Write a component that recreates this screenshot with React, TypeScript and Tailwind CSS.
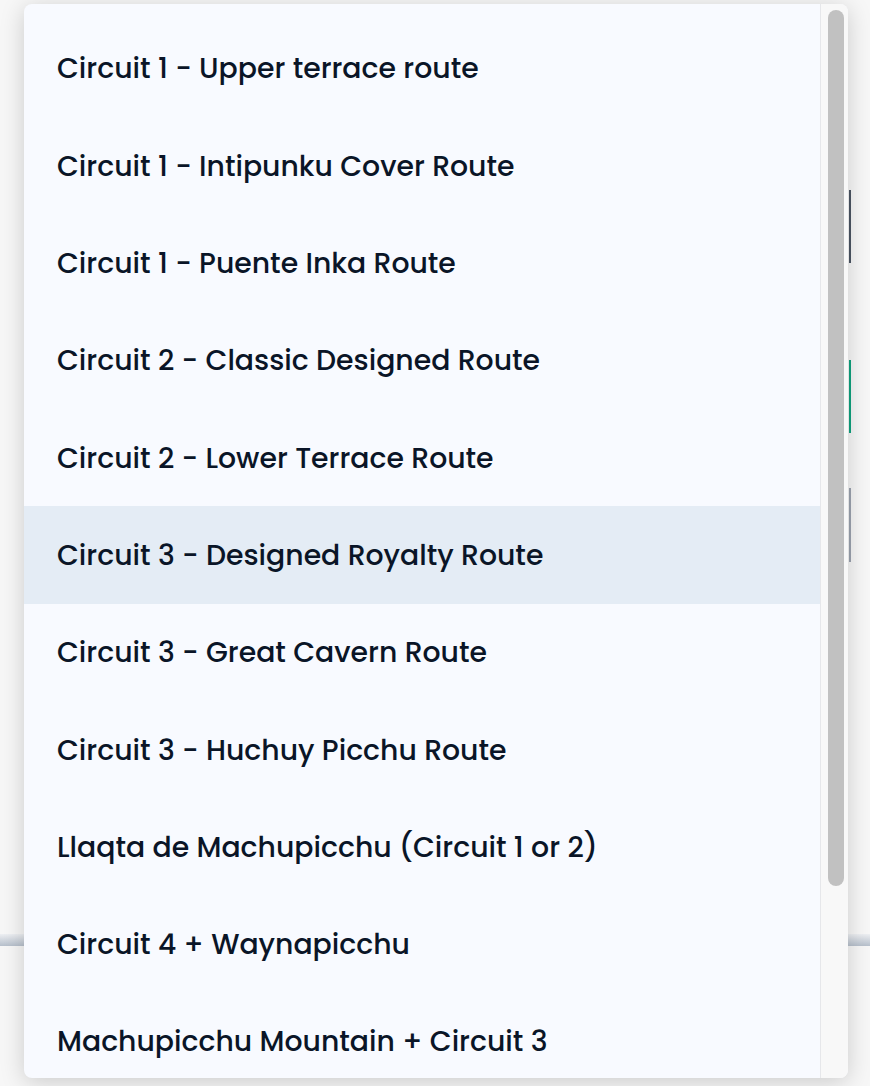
import { FC } from "react"

const ROUTES = [
  "Circuit 1 - Upper terrace route",
  "Circuit 1 - Intipunku Cover Route",
  "Circuit 1 - Puente Inka Route",
  "Circuit 2 - Classic Designed Route",
  "Circuit 2 - Lower Terrace Route",
  "Circuit 3 - Designed Royalty Route",
  "Circuit 3 - Great Cavern Route",
  "Circuit 3 - Huchuy Picchu Route",
  "Llaqta de Machupicchu (Circuit 1 or 2)",
  "Circuit 4 + Waynapicchu",
  "Machupicchu Mountain + Circuit 3"
]

const ACTIVE_INDEX = 5

interface RouteOptionProps {
  label: string
  active: boolean
}

const RouteOption: FC<RouteOptionProps> = ({ label, active }) => (
  <div
    className={`flex h-[97.3px] shrink-0 items-center pl-[33px] text-[28.3px] font-medium text-[#0a1527] ${
      active ? "bg-[#e4ecf5]" : ""
    }`}
  >
    {label}
  </div>
)

export default function App() {
  return (
    <div
      className="relative h-[1086px] w-[870px] overflow-hidden bg-[#f7f7f7]"
      style={{ fontFamily: '"Poppins", "Inter", "Noto Sans", sans-serif' }}
    >
      {/* page content behind the dropdown */}
      <div className="flex h-full flex-col pt-[190px]">
        <div className="ml-[849px] flex w-[2px] flex-col gap-[97px]">
          <div className="h-[73px] bg-[#4b5563]" />
          <div className="h-[73px] bg-[#10a37f]" />
        </div>
        <div className="ml-[849px] mt-[55px] h-[74px] w-[2px] bg-[#9ca3af]" />
        <div className="mt-[372px] h-[12px] w-full bg-gradient-to-b from-[#eef0f3] to-[#b7c0cc]" />
      </div>

      {/* dropdown menu */}
      <div className="absolute left-[24px] top-[4px] flex h-[1074px] w-[824px] overflow-hidden rounded-lg bg-[#f8faff] shadow-[0_4px_24px_rgba(0,0,0,0.18)]">
        <div className="flex flex-1 flex-col overflow-hidden border-r border-[#e6e7ea] pt-4">
          {ROUTES.map((route, i) => (
            <RouteOption key={route} label={route} active={i === ACTIVE_INDEX} />
          ))}
        </div>
        <div className="w-[27px] shrink-0 bg-[#f8f8f8] pl-[7px] pt-[6px]">
          <div className="h-[876px] w-[16px] rounded-full bg-[#c1c1c1]" />
        </div>
      </div>
    </div>
  )
}
